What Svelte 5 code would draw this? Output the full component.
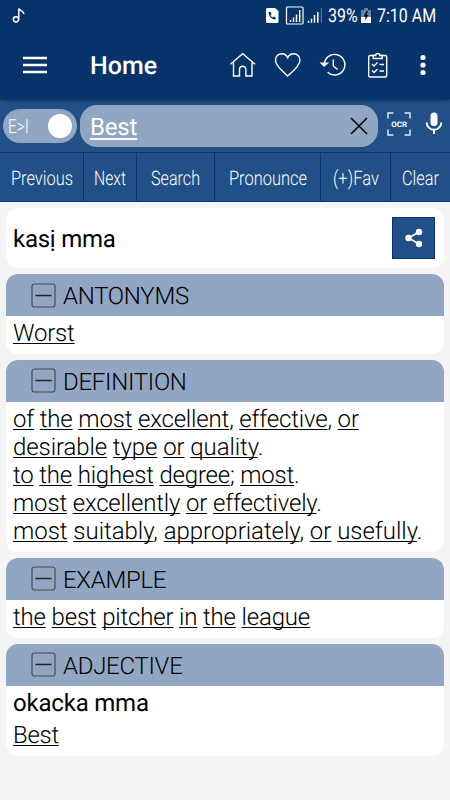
<script lang="ts">
	type Line = { text: string; spacing: number };
	type Section = { title: string; lead?: string; lines: Line[] };

	let word = $state('Best');
	let toIgbo = $state(true);
	let closed = $state<string[]>([]);

	const actions = [
		{ label: 'Previous', width: 84, text: 62 },
		{ label: 'Next', width: 53, text: 32 },
		{ label: 'Search', width: 78, text: 49 },
		{ label: 'Pronounce', width: 106, text: 78 },
		{ label: '(+)Fav', width: 70, text: 46 },
		{ label: 'Clear', width: 59, text: 37 }
	];

	const sections: Section[] = [
		{ title: 'ANTONYMS', lines: [{ text: 'Worst', spacing: -0.2 }] },
		{
			title: 'DEFINITION',
			lines: [
				{ text: 'of the most excellent, effective, or', spacing: -0.17 },
				{ text: 'desirable type or quality.', spacing: -0.09 },
				{ text: 'to the highest degree; most.', spacing: -0.19 },
				{ text: 'most excellently or effectively.', spacing: -0.17 },
				{ text: 'most suitably, appropriately, or usefully.', spacing: -0.03 }
			]
		},
		{ title: 'EXAMPLE', lines: [{ text: 'the best pitcher in the league', spacing: -0.17 }] },
		{ title: 'ADJECTIVE', lead: 'okacka mma', lines: [{ text: 'Best', spacing: -0.3 }] }
	];

	// keeps spaces and punctuation out of the links
	function split(line: string) {
		return line.split(/([a-z]+)/i).filter((p) => p !== '');
	}

	function toggle(title: string) {
		closed = closed.includes(title) ? closed.filter((t) => t !== title) : [...closed, title];
	}
</script>

<div class="app">
	<header>
		<div class="status">
			<svg class="note" width="14" height="18" viewBox="0 0 14 18">
				<circle cx="4" cy="13.3" r="2.6" />
				<path d="M6.8 13V2.5C8 5 11.5 4.5 11.9 8" />
			</svg>
			<svg class="signals" width="59" height="20" viewBox="0 0 59 20">
				<path d="M4.500 2H12l3.500 3v10.500a1.500 1.500 0 0 1-1.500 1.500H4.500A1.500 1.500 0 0 1 3 15.500V3.500A1.500 1.500 0 0 1 4.500 2z" fill="#fff" />
				<path d="M5.500 6c0 4 3 7.500 7 7.500v-2.300l-2-.700-1 1c-1-.500-1.600-1.200-2-2.200l1-1L7.700 6z" fill="#05336a" />
				<rect x="23.500" y="1" width="16.500" height="17" rx="1" fill="none" stroke="#fff" stroke-width="1.200" />
				<path d="M27.500 16v-2M30.500 16v-4.500M33.500 16V8.500M36.700 16V4" stroke="#fff" stroke-width="1.500" />
				<path d="M45.500 16.800v-2M48.500 16.800v-4M51.500 16.800V9M54.800 16.800V6" stroke="#fff" stroke-width="1.500" />
				<path d="M58.300 16.800V2" stroke="#6583a8" />
			</svg>
			<span class="battery-text"><span>39%</span></span>
			<svg class="battery" width="10" height="16" viewBox="0 0 10 16">
				<path d="M0 2h3V0h4v2h3v8H0z" fill="#6583a8" />
				<path d="M0 9h10v6H0z" fill="#fff" />
				<path d="M5.500 3 2.500 8.500h2L4 12.500 7.500 7h-2L7 3z" fill="#111" />
			</svg>
			<span class="time"><span>7:10 AM</span></span>
		</div>
		<div class="toolbar">
			<button class="menu" aria-label="Menu">
				<svg width="24" height="18" viewBox="0 0 24 18">
					<path d="M0 2h24M0 9h24M0 16h24" stroke="#fff" stroke-width="2.700" />
				</svg>
			</button>
			<h1>Home</h1>
			<button aria-label="Home">
				<svg width="26" height="26" viewBox="0 0 26 26">
					<path d="M.400 12.300 12.700 1.700 25 12.300M3.500 10.500V24H9.500v-6.500a3.200 3.200 0 0 1 6.400 0V24H22V10.500" />
				</svg>
			</button>
			<button aria-label="Favourites">
				<svg width="26" height="26" viewBox="0 0 26 26">
					<path d="M12.700 24C8 19.500.500 14 .500 8.200.500 4.500 3.200 1.800 6.700 1.800c2.800 0 5 1.600 6 4 1-2.400 3.200-4 6-4 3.500 0 6.200 2.700 6.200 6.400C24.900 14 17.700 19.500 12.700 24z" />
				</svg>
			</button>
			<button aria-label="History">
				<svg width="26" height="26" viewBox="0 0 26 26">
					<path d="M4.300 12.800a10.300 10.300 0 1 1 3.300 7.500M13.300 7.500v6.500l4.300 3.500" />
					<path d="M1.300 11.300h6L4.200 14z" fill="#fff" />
				</svg>
			</button>
			<button aria-label="Tests">
				<svg width="26" height="26" viewBox="0 0 26 26">
					<rect x="3.700" y="3.500" width="18" height="21.500" rx="1.500" />
					<path d="M8.200 6.500h9v-3h-2.500a2 2 0 0 0-4 0H8.200z" fill="#05336a" />
					<path d="m7 12 2 2 3.500-3.500M7 18.500l2 2 3.500-3.500M14.500 12.500H19M14.500 19H19" />
				</svg>
			</button>
			<button class="more" aria-label="More">
				<svg width="6" height="22" viewBox="0 0 6 22">
					<circle cx="3" cy="3.500" r="2.600" />
					<circle cx="3" cy="11" r="2.600" />
					<circle cx="3" cy="18.500" r="2.600" />
				</svg>
			</button>
		</div>
	</header>

	<div class="search">
		<button class="switch" class:off={!toIgbo} aria-label="Direction" onclick={() => (toIgbo = !toIgbo)}>
			<svg width="23" height="24">
				<text x="0" y="19" textLength="21" lengthAdjust="spacingAndGlyphs">{toIgbo ? 'E>I' : 'I>E'}</text>
			</svg>
			<i></i>
		</button>
		<div class="field">
			<input type="text" aria-label="Word" spellcheck="false" bind:value={word} />
			<button class="clear" aria-label="Clear word" onclick={() => (word = '')}>
				<svg width="18" height="18" viewBox="0 0 18 18">
					<path d="m1 1 16 16M17 1 1 17" stroke="#080808" stroke-width="1.700" />
				</svg>
			</button>
		</div>
		<svg class="ocr" width="24" height="24" viewBox="0 0 24 24">
			<path d="M1 6.500V1h5.500M17.500 1H23v5.500M23 17.500V23h-5.500M6.500 23H1v-5.500" fill="none" stroke="#dce5f0" stroke-width="1.500" />
			<text x="4.200" y="14.900" textLength="16" lengthAdjust="spacingAndGlyphs">OCR</text>
		</svg>
		<svg class="mic" width="18" height="23" viewBox="0 0 18 23">
			<rect x="5.500" y=".500" width="7" height="13.500" rx="3.500" fill="#fff" />
			<path d="M1.700 10.500a7.300 7.300 0 0 0 14.600 0M9 18v4" fill="none" stroke="#fff" stroke-width="1.900" />
		</svg>
	</div>

	<nav>
		{#each actions as a (a.label)}
			<button style:width="{a.width}px">
				<svg width={a.text} height="30">
					<text x="0" y="23" textLength={a.text} lengthAdjust="spacingAndGlyphs">{a.label}</text>
				</svg>
			</button>
		{/each}
	</nav>

	<main>
		<div class="card result">
			<span>kasị mma</span>
			<button aria-label="Share">
				<svg width="20" height="20" viewBox="0 0 20 20">
					<path d="M15 4 4.500 10 15 16" fill="none" stroke="#fff" stroke-width="1.600" />
					<circle cx="15" cy="4" r="3.200" />
					<circle cx="4.500" cy="10" r="3.200" />
					<circle cx="15" cy="16" r="3.200" />
				</svg>
			</button>
		</div>

		{#each sections as s (s.title)}
			<section class="card">
				<button class="head" onclick={() => toggle(s.title)}>
					<svg width="25" height="25" viewBox="0 0 25 25">
						<rect x="1" y="1" width="23" height="23" rx="2.500" fill="none" stroke="#4b4b4b" stroke-width="1.200" />
						<path d="M4.500 12.500h16" stroke="#222" stroke-width="1.400" />
					</svg>
					<span>{s.title}</span>
				</button>
				{#if !closed.includes(s.title)}
					<div class="body">
						{#if s.lead}
							<p class="lead">{s.lead}</p>
						{/if}
						{#each s.lines as line (line.text)}
							<p style:letter-spacing="{line.spacing}px">{#each split(line.text) as part}{#if /[a-z]/i.test(part)}<u>{part}</u>{:else}{part}{/if}{/each}</p>
						{/each}
					</div>
				{/if}
			</section>
		{/each}
	</main>
</div>

<style>
	:global(body) {
		background: #f4f4f4;
		margin: 0;
	}

	.app {
		background: #f4f4f4;
		color: #000;
		font-family: Roboto, sans-serif;
		height: 800px;
		overflow: hidden;
		text-rendering: geometricPrecision;
		width: 450px;
	}

	button {
		background: none;
		border: 0;
		color: inherit;
		cursor: pointer;
		font: inherit;
		padding: 0;
		text-rendering: inherit;
	}

	svg {
		display: block;
		flex: none;
		overflow: visible;
	}

	header {
		background: #05336a;
		box-shadow: 0 1px 4px rgba(0, 20, 60, 0.7);
		color: #fff;
		height: 99px;
		position: relative;
	}

	.status {
		box-sizing: border-box;
		display: flex;
		height: 32px;
		padding-top: 6px;
	}

	.note {
		fill: none;
		margin: 0 auto 0 12px;
		stroke: #fff;
		stroke-width: 1.5;
	}

	.battery-text,
	.time {
		font-size: 19px;
		line-height: 22px;
		white-space: nowrap;
	}

	.battery-text {
		margin: -1px 3px 0 6px;
		width: 30px;
	}

	.time {
		margin: -1px 12px 0 6px;
		width: 61px;
	}

	.status span span {
		display: inline-block;
		transform: scaleX(0.84);
		transform-origin: 0 0;
	}

	.battery {
		margin-top: 2px;
	}

	.toolbar {
		align-items: center;
		display: flex;
		height: 66px;
	}

	.toolbar button {
		margin-right: 19px;
	}

	.toolbar button svg {
		fill: none;
		stroke: #fff;
		stroke-width: 1.4;
	}

	.toolbar .menu {
		margin: 0 43px 0 23px;
	}

	.toolbar .more {
		margin: 0 24.5px 0 10px;
	}

	.toolbar .more circle {
		fill: #fff;
		stroke: none;
	}

	h1 {
		flex: 1;
		font-size: 25px;
		font-weight: 500;
		line-height: 30px;
		margin: 4px 0 0;
	}

	.search {
		align-items: center;
		background: #205087;
		box-sizing: border-box;
		display: flex;
		height: 53px;
		padding: 1px 0 0 3px;
	}

	.switch {
		align-items: center;
		background: #91a6c3;
		border-radius: 17px;
		display: flex;
		height: 34px;
		justify-content: space-between;
		padding: 0 5px;
		width: 74px;
	}

	.switch text {
		fill: #fff;
		font-size: 19.5px;
		font-weight: 300;
	}

	.switch i {
		background: #fff;
		border-radius: 50%;
		height: 24px;
		width: 24px;
	}

	.switch.off {
		flex-direction: row-reverse;
	}

	.field {
		align-items: center;
		background: #91a6c3;
		border-radius: 17px;
		box-sizing: border-box;
		display: flex;
		height: 42px;
		margin-left: 3px;
		padding: 0 10.5px 0 10px;
		width: 298px;
	}

	.field input {
		background: none;
		border: 0;
		color: #fff;
		flex: 1;
		font: 24px/30px Roboto, sans-serif;
		letter-spacing: -0.2px;
		min-width: 0;
		outline: 0;
		padding: 2px 0 0;
		text-decoration: underline 1.5px;
		text-rendering: inherit;
		text-underline-offset: 3px;
	}

	.ocr {
		margin: -5px 14px 0 9px;
	}

	.ocr text {
		fill: #fff;
		font-size: 7.5px;
		font-weight: 700;
	}

	.mic {
		margin-top: -5px;
	}

	nav {
		background: #205087;
		border-bottom: 1px solid #05336a;
		border-top: 1px solid #05336a;
		display: flex;
		height: 48px;
	}

	nav button {
		align-items: center;
		border-right: 1px solid #05336a;
		box-sizing: border-box;
		display: flex;
		flex: none;
		justify-content: center;
	}

	nav button:last-child {
		border-right: 0;
	}

	nav text {
		fill: #fff;
		font-size: 20px;
		font-weight: 300;
	}

	main {
		display: flex;
		flex-direction: column;
		gap: 5.8px;
		padding: 6.4px 6px 0;
	}

	.card {
		background: #fff;
		border-radius: 12px;
		overflow: hidden;
	}

	.result {
		align-items: center;
		box-sizing: border-box;
		display: flex;
		font-size: 24px;
		height: 60px;
		justify-content: space-between;
		letter-spacing: -0.25px;
		padding: 0 9px 0 7px;
	}

	.result span {
		padding-top: 2px;
	}

	.result button {
		align-items: center;
		background: #205087;
		border: 1px solid #05336a;
		box-sizing: border-box;
		display: flex;
		height: 42px;
		justify-content: center;
		width: 43px;
	}

	.result circle {
		fill: #fff;
	}

	.head {
		align-items: center;
		background: #91a6c3;
		display: flex;
		font-size: 24px;
		font-weight: 300;
		gap: 7px;
		height: 42px;
		letter-spacing: -0.28px;
		padding-left: 25px;
		width: 100%;
	}

	.head span {
		padding-top: 2px;
	}

	.body {
		padding: 3px 7px 7px;
	}

	p {
		font-size: 24px;
		font-weight: 300;
		line-height: 28px;
		margin: 0;
		white-space: nowrap;
	}

	.lead {
		font-weight: 400;
		letter-spacing: -0.2px;
		margin-bottom: 4px;
	}

	u {
		text-decoration: underline 1px;
		text-decoration-skip-ink: none;
		text-underline-offset: 2px;
	}
</style>
